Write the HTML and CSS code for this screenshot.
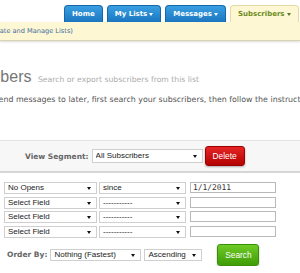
FILE: index.html
```
<!DOCTYPE html>
<html lang="en">

<head>
  <meta charset="UTF-8" />
  <meta name="viewport" content="width=device-width, initial-scale=1.0" />
  <title>Subscribers</title>
  <link rel="stylesheet" href="styles.css">
</head>

<body>

  <div class="tabs">
    <a class="tab" href="#">Home</a>
    <a class="tab" href="#">My Lists<span class="caret"></span></a>
    <a class="tab" href="#">Messages<span class="caret"></span></a>
    <a class="tab active" href="#">Subscribers<span class="caret"></span></a>
  </div>
  <div class="subnav"><span>(Create and Manage Lists)</span></div>

  <div class="intro">
    <h1>Subscribers <small>Search or export subscribers from this list</small></h1>
    <p>Pick who to send messages to later, first search your subscribers, then follow the instructions below.</p>
  </div>

  <div class="segment">
    <label>View Segment:</label>
    <span class="pick seg"><select><option>All Subscribers</option></select></span>
    <button class="btn red">Delete</button>
  </div>

  <div class="filters">
    <div class="row">
      <span class="pick field"><select><option>No Opens</option></select></span>
      <span class="pick op"><select><option>since</option></select></span>
      <input type="text" value="1/1/2011" />
    </div>
    <div class="row">
      <span class="pick field"><select><option>Select Field</option></select></span>
      <span class="pick op"><select><option>-----------</option></select></span>
      <input type="text" />
    </div>
    <div class="row">
      <span class="pick field"><select><option>Select Field</option></select></span>
      <span class="pick op"><select><option>-----------</option></select></span>
      <input type="text" />
    </div>
    <div class="row">
      <span class="pick field"><select><option>Select Field</option></select></span>
      <span class="pick op"><select><option>-----------</option></select></span>
      <input type="text" />
    </div>
  </div>

  <div class="order">
    <label>Order By:</label>
    <span class="pick sort"><select><option>Nothing (Fastest)</option></select></span>
    <span class="pick dir"><select><option>Ascending</option></select></span>
    <button class="btn green">Search</button>
  </div>

</body>

</html>
```

FILE: styles.css
```
body {
  margin: 0;
  overflow: hidden;
  background-color: #fff;
  font-family: "DejaVu Sans", Verdana, sans-serif;
}

/* top navigation */

.tabs {
  display: flex;
  gap: 4px;
  padding: 5px 0 0 64px;
}

.tab {
  display: flex;
  align-items: center;
  height: 17px;
  padding: 0 7px;
  box-sizing: border-box;
  border: 1px solid #1467a8;
  border-bottom: none;
  border-radius: 4px 4px 0 0;
  background: linear-gradient(#3a9fe2, #1a76c0);
  color: #fff;
  font-size: 7px;
  font-weight: bold;
  text-decoration: none;
}

.tab.active {
  border-color: #e4dba4;
  background: #fdf7d3;
  color: #6c8b22;
}

.caret {
  display: inline-block;
  margin-left: 2px;
  border-left: 2.5px solid transparent;
  border-right: 2.5px solid transparent;
  border-top: 3px solid #fff;
}

.tab.active .caret {
  border-top-color: #5d7a1c;
}

.subnav {
  height: 18px;
  display: flex;
  align-items: center;
  background-color: #fdf7d3;
  border-bottom: 1px solid #d9d3b4;
  box-shadow: 0 1px 2px rgba(0, 0, 0, 0.15);
  font-size: 6.6px;
  color: #3d6d9f;
  white-space: nowrap;
}

.subnav span {
  margin-left: -14px;
}

/* heading */

.intro {
  margin: 26px 0 0 -53px;
  white-space: nowrap;
}

h1 {
  margin: 0;
  line-height: 20px;
  font-family: "Liberation Sans", Arial, sans-serif;
  font-size: 16px;
  font-weight: normal;
  color: #767676;
}

h1 small {
  margin-left: 2px;
  font-family: "DejaVu Sans", Verdana, sans-serif;
  font-size: 7.7px;
  color: #acacac;
}

.intro p {
  margin: 5px 0 0;
  line-height: 10px;
  font-size: 7.9px;
  color: #555;
}

/* form */

label {
  font-size: 7.5px;
  font-weight: bold;
  color: #666;
}

.segment {
  margin-top: 35px;
  height: 30px;
  display: flex;
  align-items: center;
  padding-left: 25px;
  background-color: #f7f7f7;
  border-top: 1px solid #e2e2e2;
  border-bottom: 2px solid #d6d6d6;
}

.segment label {
  margin-right: 3px;
}

.pick {
  position: relative;
  display: inline-block;
}

.pick::after {
  content: "";
  position: absolute;
  right: 6px;
  top: 5px;
  border-left: 2.5px solid transparent;
  border-right: 2.5px solid transparent;
  border-top: 3px solid #111;
}

select {
  appearance: none;
  display: block;
  width: 100%;
  height: 12px;
  margin: 0;
  padding: 0 0 0 3px;
  border: 1px solid #cfcfcf;
  border-radius: 0;
  background-color: #fff;
  font-family: "Liberation Sans", Arial, sans-serif;
  font-size: 8px;
  line-height: 10px;
  color: #222;
}

.seg { width: 111px; }
.field { width: 93px; }
.op { width: 87px; }
.sort { width: 91px; }
.dir { width: 58px; }

.seg select {
  height: 14px;
}

.seg::after {
  top: 6px;
}

.btn {
  height: 20px;
  padding: 0;
  border-radius: 3px;
  font-family: "Liberation Sans", Arial, sans-serif;
  font-size: 8.3px;
  color: #fff;
  box-shadow: 0 1px 2px rgba(0, 0, 0, 0.3);
}

.red {
  width: 40px;
  margin-left: 2px;
  border: 1px solid #9c0000;
  background: linear-gradient(#e52525, #b40202);
}

.green {
  width: 42px;
  height: 22px;
  margin-left: 15px;
  border: 1px solid #3b8e0b;
  background: linear-gradient(#6fcb25, #3f9c06);
}

.filters {
  margin-top: 9px;
  padding-left: 4px;
  display: flex;
  flex-direction: column;
  gap: 2.5px;
}

.row {
  display: flex;
  gap: 2px;
}

input {
  width: 86px;
  height: 11px;
  margin-left: 2px;
  padding: 0 0 0 2px;
  box-sizing: border-box;
  border: 1px solid #b9b9b9;
  font-family: "DejaVu Sans Mono", monospace;
  font-size: 7.9px;
  color: #333;
}

.order {
  margin-top: 6px;
  display: flex;
  align-items: center;
  padding-left: 7px;
}

.order label {
  margin-right: 3px;
}

.order .dir {
  margin-left: 3px;
}
```
